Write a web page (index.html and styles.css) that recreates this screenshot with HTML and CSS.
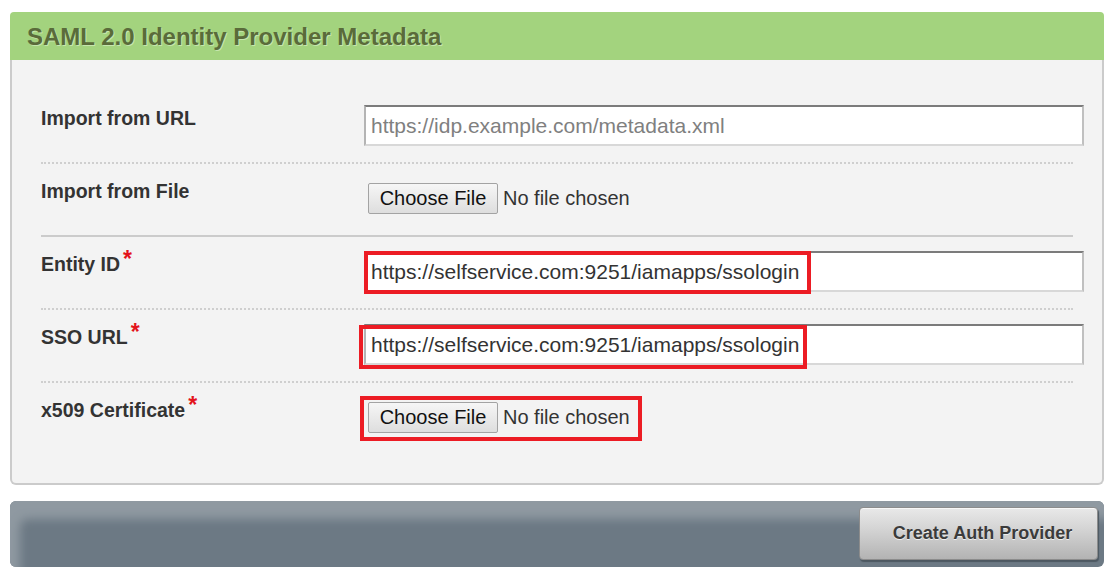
FILE: index.html
```html
<!DOCTYPE html>
<html lang="en">
<head>
    <meta charset="UTF-8">
    <meta name="viewport" content="width=device-width, initial-scale=1.0">
    <title>SAML 2.0 Identity Provider Metadata</title>
    <link rel="stylesheet" href="styles.css">
</head>
<body>
    <div class="page">
        <section class="panel">
            <h2 class="panel-title">SAML 2.0 Identity Provider Metadata</h2>
            <div class="panel-body">
                <div class="field-row dotted">
                    <label class="field-label" for="metaUrl">Import from URL</label>
                    <div class="field-control">
                        <input class="text-input" id="metaUrl" type="text" placeholder="https://idp.example.com/metadata.xml">
                    </div>
                </div>
                <div class="field-row solid">
                    <label class="field-label">Import from File</label>
                    <div class="field-control">
                        <label class="file-pick">
                            <span class="file-btn">Choose File</span>
                            <span class="file-name">No file chosen</span>
                            <input type="file" hidden>
                        </label>
                    </div>
                </div>
                <div class="field-row dotted">
                    <label class="field-label" for="entityId">Entity ID<span class="req">*</span></label>
                    <div class="field-control">
                        <input class="text-input filled" id="entityId" type="text" value="https://selfservice.com:9251/iamapps/ssologin">
                        <span class="mark mark-entity"></span>
                    </div>
                </div>
                <div class="field-row dotted">
                    <label class="field-label" for="ssoUrl">SSO URL<span class="req">*</span></label>
                    <div class="field-control">
                        <input class="text-input filled" id="ssoUrl" type="text" value="https://selfservice.com:9251/iamapps/ssologin">
                        <span class="mark mark-sso"></span>
                    </div>
                </div>
                <div class="field-row">
                    <label class="field-label">x509 Certificate<span class="req">*</span></label>
                    <div class="field-control">
                        <label class="file-pick">
                            <span class="file-btn">Choose File</span>
                            <span class="file-name">No file chosen</span>
                            <input type="file" hidden>
                        </label>
                        <span class="mark mark-cert"></span>
                    </div>
                </div>
            </div>
        </section>

        <div class="action-bar">
            <button class="btn-create" type="button">Create Auth Provider</button>
        </div>
    </div>
</body>
</html>
```

FILE: styles.css
```css
body {
    margin: 0;
    background-color: #fff;
    font-family: "Liberation Sans", Arial, sans-serif;
    color: #333;
}
.page {
    padding: 12px 13px 0 10px;
}

/* panel */
.panel {
    width: 1094px;
}
.panel-title {
    margin: 0;
    height: 48px;
    line-height: 49px;
    padding-left: 17px;
    background-color: #a3d37e;
    border-radius: 4px 4px 0 0;
    color: #5a6b3a;
    font-size: 24px;
    font-weight: bold;
    text-shadow: 1px 1px 0 #c6e6ad;
}
.panel-body {
    background-color: #f3f3f3;
    border: 2px solid #cbcbcb;
    border-top: none;
    border-radius: 0 0 6px 6px;
    padding: 31px 29px 29px 29px;
}

/* rows */
.field-row {
    display: grid;
    grid-template-columns: 323px 1fr;
    padding: 14px 0 16px;
}
.field-row.dotted {
    border-bottom: 2px dotted #cfcfcf;
}
.field-row.solid {
    border-bottom: 2px solid #cbcbcb;
}
.field-label {
    padding-top: 2px;
    font-size: 19.5px;
    line-height: 22px;
    font-weight: bold;
    color: #333;
}
.req {
    color: #e3141c;
    font-size: 23px;
    margin-left: 3px;
    vertical-align: 4px;
    line-height: 10px;
}
.field-control {
    position: relative;
    height: 41px;
    display: flex;
    align-items: center;
}

/* inputs */
.text-input {
    box-sizing: border-box;
    width: 720px;
    height: 41px;
    margin: 0;
    padding: 0 5px;
    border: 2px solid;
    border-color: #7b7b7b #c0c0c0 #d8d8d8 #b4b4b4;
    background-color: #fff;
    font-family: "Liberation Sans", Arial, sans-serif;
    font-size: 21px;
    color: #333;
    outline: none;
}
.text-input::placeholder {
    color: #808080;
}

.file-pick {
    display: flex;
    align-items: center;
    margin-left: 4px;
    font-size: 20px;
    cursor: pointer;
}
.file-btn {
    box-sizing: border-box;
    width: 130px;
    height: 31px;
    line-height: 29px;
    text-align: center;
    border: 1px solid #a3a3a3;
    border-radius: 2px;
    background: linear-gradient(#f6f6f6, #dedede);
    color: #111;
}
.file-name {
    margin-left: 5px;
    color: #333;
}

/* red highlight boxes drawn over the fields */
.mark {
    position: absolute;
    box-sizing: border-box;
    border: 4px solid #ec1c24;
    pointer-events: none;
}
.mark-entity {
    left: 0;
    top: 0;
    width: 447px;
    height: 43px;
}
.mark-sso {
    left: -5px;
    top: 1px;
    width: 448px;
    height: 44px;
}
.mark-cert {
    left: -4px;
    top: -1px;
    width: 282px;
    height: 45px;
}

/* bottom bar */
.action-bar {
    width: 1094px;
    height: 66px;
    margin-top: 16px;
    box-sizing: border-box;
    padding: 6px 6px 0 0;
    display: flex;
    justify-content: flex-end;
    align-items: flex-start;
    background-color: #6c7984;
    border-radius: 6px;
    box-shadow: inset 12px 20px 10px -2px #8f99a1;
}
.btn-create {
    width: 239px;
    height: 53px;
    padding: 0 0 0 8px;
    border: 1px solid #8c8c8c;
    border-radius: 4px;
    background: linear-gradient(#e9e9e9, #d2d2d2 45%, #b3b3b3);
    box-shadow: 1px 2px 1px #4d5861, inset 0 1px 0 #f7f7f7;
    font-family: "Liberation Sans", Arial, sans-serif;
    font-size: 18px;
    font-weight: bold;
    color: #3b3b3b;
    text-shadow: 0 1px 0 #eee;
    cursor: pointer;
}
```
